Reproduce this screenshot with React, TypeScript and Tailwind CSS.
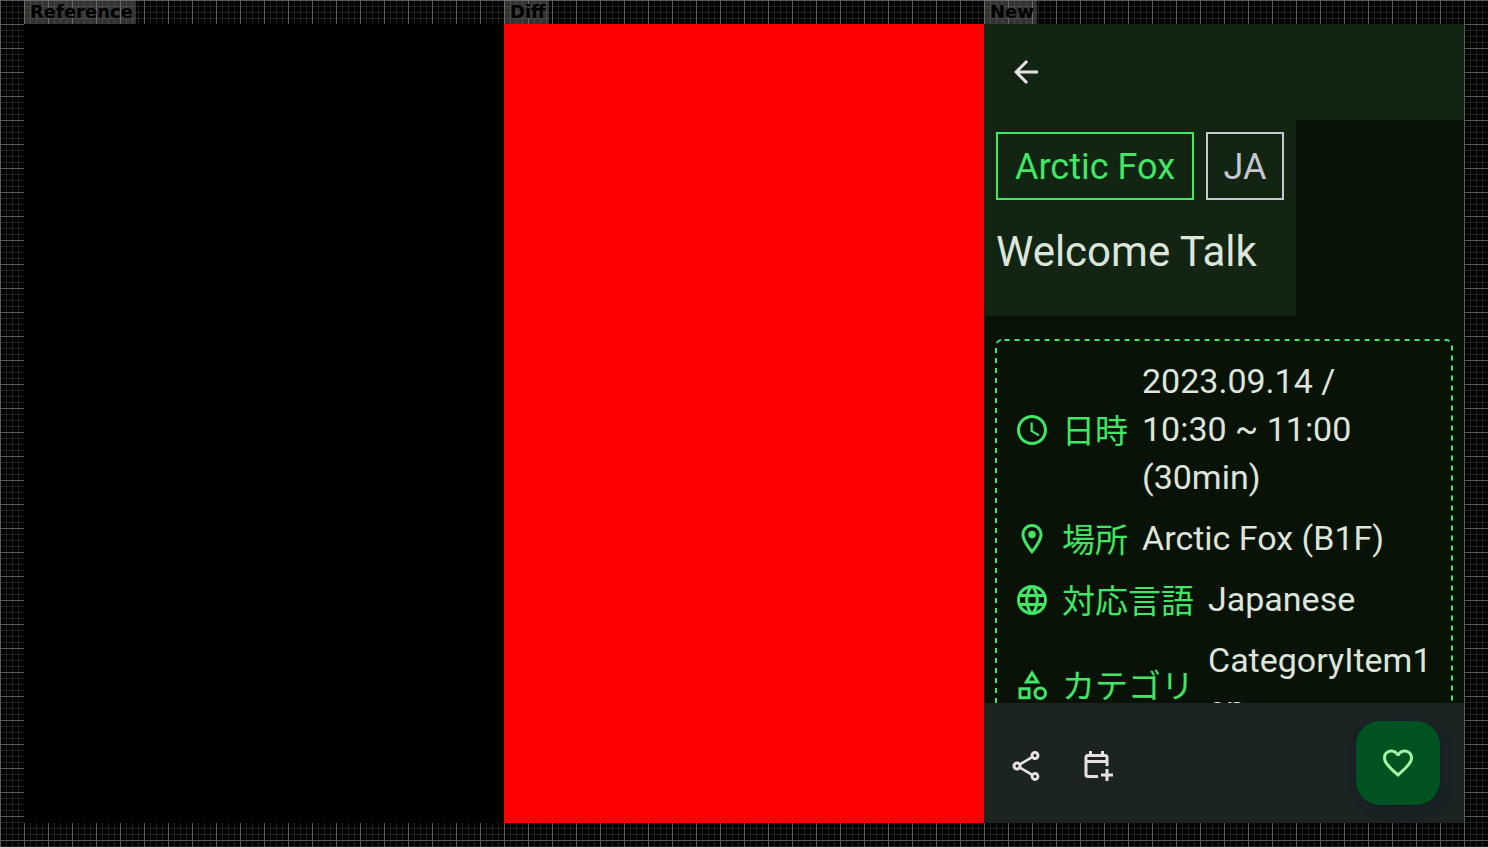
import type { ReactNode } from "react";
import {
  MdArrowBack,
  MdFavoriteBorder,
  MdLanguage,
  MdOutlineCategory,
  MdOutlineLocationOn,
  MdOutlineShare,
  MdSchedule,
} from "react-icons/md";

function CalendarAddIcon() {
  return (
    <svg viewBox="0 0 24 24" className="size-9" fill="currentColor" aria-hidden="true">
      <path d="M17 22v-3h-3v-2h3v-3h2v3h3v2h-3v3zM5 20q-.825 0-1.412-.587T3 18V6q0-.825.588-1.412T5 4h1V2h2v2h6V2h2v2h1q.825 0 1.413.588T19 6v6.1q-.5-.075-1-.075t-1 .075V10H5v8h7q0 .5.075 1t.275 1zM5 8h12V6H5z" />
    </svg>
  );
}

function Column({ label, children }: { label: string; children: ReactNode }) {
  return (
    <section className="flex min-w-0 flex-1 flex-col">
      <h2 className="h-6 self-start bg-[#808080]/40 pr-[3px] pl-[6px] font-['DejaVu_Sans',sans-serif] text-[18px] leading-6 font-bold text-black">
        {label}
      </h2>
      {children}
    </section>
  );
}

function InfoRow({ icon, label, children }: { icon: ReactNode; label: string; children: ReactNode }) {
  return (
    <div className="flex items-center gap-3.5">
      <dt className="flex shrink-0 items-center gap-3 text-[33px] text-[#43e564]">
        {icon}
        <span className="pt-1 leading-[44px]">{label}</span>
      </dt>
      <dd className="pb-[2px] text-[34px] text-[#dee5db]">{children}</dd>
    </div>
  );
}

function SessionScreen() {
  return (
    <div className="flex min-h-0 flex-1 flex-col bg-[#081207] font-[Roboto,'Noto_Sans_CJK_JP',sans-serif]">
      <header className="flex h-24 shrink-0 items-center bg-[#122412] pl-[6px]">
        <button aria-label="Back" className="flex size-[72px] items-center justify-center text-[#e6e1e5]">
          <MdArrowBack className="size-9" />
        </button>
      </header>

      <main className="min-h-0 flex-1 overflow-hidden">
        <div className="w-fit bg-[#122412] px-3 pt-3 pb-9">
          <div className="flex gap-3 text-[36px] leading-[62px]">
            <span className="min-w-[198px] border-2 border-[#43e564] pt-[2px] text-center text-[#43e564]">
              Arctic Fox
            </span>
            <span className="min-w-[78px] border-2 border-[#c4c7cf] pt-[2px] text-center text-[#c4c7cf]">JA</span>
          </div>
          <h1 className="mt-6 text-[42px] leading-[56px] text-[#dee5db]">Welcome Talk</h1>
        </div>

        <div className="relative mx-[11px] mt-[23px] min-h-[416px] px-[19px] py-[18px]">
          <svg className="absolute inset-0 h-full w-full" fill="none" aria-hidden="true">
            <rect
              x="1"
              y="1"
              rx="6"
              className="h-[calc(100%-2px)] w-[calc(100%-2px)]"
              stroke="#43e564"
              strokeWidth="2"
              strokeDasharray="5 5"
              strokeDashoffset="-2.6"
            />
          </svg>
          <dl className="flex flex-col gap-[11px] leading-[48px]">
            <InfoRow icon={<MdSchedule className="size-9" />} label="日時">
              2023.09.14 /<br />
              10:30 ~ 11:00
              <br />
              (30min)
            </InfoRow>
            <InfoRow icon={<MdOutlineLocationOn className="size-9" />} label="場所">
              Arctic Fox (B1F)
            </InfoRow>
            <InfoRow icon={<MdLanguage className="size-9" />} label="対応言語">
              Japanese
            </InfoRow>
            <InfoRow icon={<MdOutlineCategory className="size-9" />} label="カテゴリ">
              CategoryItem1
              <br />
              en
            </InfoRow>
          </dl>
        </div>
      </main>

      <footer className="flex h-[120px] shrink-0 items-start bg-[#1b2421] pr-6 pl-[6px] text-[#e6e1e5]">
        <button aria-label="Share" className="mt-[27px] flex size-[72px] items-center justify-center">
          <MdOutlineShare className="size-9" />
        </button>
        <button aria-label="Add to calendar" className="mt-[27px] flex size-[72px] items-center justify-center">
          <CalendarAddIcon />
        </button>
        <button
          aria-label="Favorite"
          className="mt-[18px] ml-auto flex size-[84px] items-center justify-center rounded-3xl bg-[#005320] text-[#a2f6a5] shadow-[0_2px_2px_#161d21,3px_6px_0_9px_#1a2124]"
        >
          <MdFavoriteBorder className="size-9" />
        </button>
      </footer>
    </div>
  );
}

export default function App() {
  return (
    <div className="flex h-screen bg-black bg-[linear-gradient(to_right,#5a5a5a_1px,transparent_1px),linear-gradient(to_bottom,#5a5a5a_1px,transparent_1px),linear-gradient(to_right,#222222_1px,transparent_1px),linear-gradient(to_bottom,#222222_1px,transparent_1px)] bg-[size:24px_24px,24px_24px,6px_6px,6px_6px] px-6 pb-6">
      <Column label="Reference">
        <div className="flex-1 bg-black" />
      </Column>
      <Column label="Diff">
        <div className="flex-1 bg-[#ff0000]" />
      </Column>
      <Column label="New">
        <SessionScreen />
      </Column>
    </div>
  );
}
